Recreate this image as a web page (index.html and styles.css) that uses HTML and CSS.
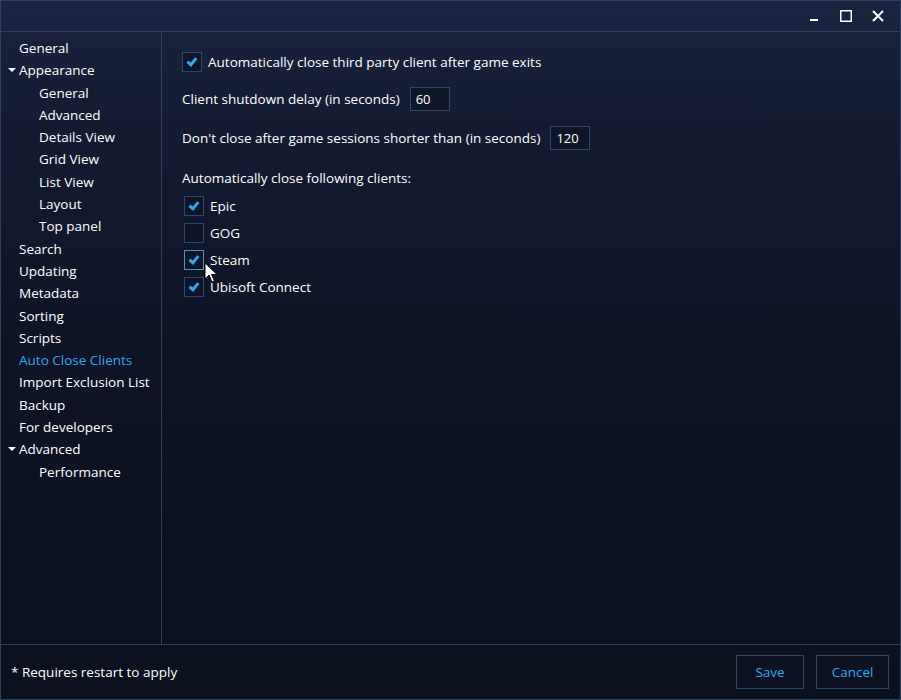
FILE: index.html
```html
<!DOCTYPE html>
<html>
<head>
<meta charset="utf-8">
<link rel="stylesheet" href="styles.css">
</head>
<body>
<div class="window">
  <div class="titlebar">
    <div class="tb-btn"><svg width="10" height="10" viewBox="0 0 10 10"><rect x="1" y="8" width="8" height="2" fill="#fff"/></svg></div>
    <div class="tb-btn"><svg width="12" height="12" viewBox="0 0 12 12"><rect x="0.75" y="0.75" width="10.5" height="10.5" fill="none" stroke="#fff" stroke-width="1.5"/></svg></div>
    <div class="tb-btn"><svg width="12" height="12" viewBox="0 0 12 12"><path d="M1 1L11 11M11 1L1 11" stroke="#fff" stroke-width="2"/></svg></div>
  </div>
  <div class="main">
    <nav class="sidebar">
      <div class="item">General</div>
      <div class="item parent"><span class="arrow"></span>Appearance</div>
      <div class="item sub">General</div>
      <div class="item sub">Advanced</div>
      <div class="item sub">Details View</div>
      <div class="item sub">Grid View</div>
      <div class="item sub">List View</div>
      <div class="item sub">Layout</div>
      <div class="item sub">Top panel</div>
      <div class="item">Search</div>
      <div class="item">Updating</div>
      <div class="item">Metadata</div>
      <div class="item">Sorting</div>
      <div class="item">Scripts</div>
      <div class="item active">Auto Close Clients</div>
      <div class="item">Import Exclusion List</div>
      <div class="item">Backup</div>
      <div class="item">For developers</div>
      <div class="item parent"><span class="arrow"></span>Advanced</div>
      <div class="item sub">Performance</div>
    </nav>
    <section class="content">
      <label class="check-row first"><span class="box checked"></span>Automatically close third party client after game exits</label>
      <div class="field-row"><span>Client shutdown delay (in seconds)</span><span class="input">60</span></div>
      <div class="field-row"><span>Don't close after game sessions shorter than (in seconds)</span><span class="input">120</span></div>
      <div class="section-label">Automatically close following clients:</div>
      <div class="clients">
        <label class="check-row"><span class="box checked"></span>Epic</label>
        <label class="check-row"><span class="box"></span>GOG</label>
        <label class="check-row"><span class="box checked hover"></span>Steam<svg class="cursor" width="14" height="22" viewBox="0 0 14 22"><path d="M1 1L1 17L5 13L8 20L10.5 19L7.5 12.5L13 12.5Z" fill="#fff" stroke="#000" stroke-width="1"/></svg></label>
        <label class="check-row"><span class="box checked"></span>Ubisoft Connect</label>
      </div>
    </section>
  </div>
  <div class="footer">
    <span class="note">* Requires restart to apply</span>
    <div class="buttons">
      <button class="btn save">Save</button>
      <button class="btn cancel">Cancel</button>
    </div>
  </div>
</div>
</body>
</html>
```
FILE: styles.css
```css
html, body {
  margin: 0;
  padding: 0;
  background: #0c1120;
}
body {
  font-family: "Open Sans", "Noto Sans", sans-serif;
  font-size: 13.5px;
  font-weight: 500;
  color: #ffffff;
}
.window {
  width: 901px;
  height: 700px;
  box-sizing: border-box;
  border: 1px solid #2a4260;
  display: flex;
  flex-direction: column;
  background: linear-gradient(to bottom, #1a2340 0px, #141b33 120px, #0e1325 360px, #0c1120 700px);
}
.titlebar {
  height: 30px;
  border-bottom: 1px solid #2a4260;
  display: flex;
  justify-content: flex-end;
  align-items: center;
  padding-right: 6px;
}
.tb-btn {
  width: 32px;
  height: 30px;
  display: flex;
  align-items: center;
  justify-content: center;
}
.main {
  flex: 1;
  display: flex;
  min-height: 0;
  border-bottom: 1px solid #2a4260;
}
.sidebar {
  width: 160px;
  border-right: 1px solid #2a4260;
  padding-top: 5px;
}
.item {
  height: 22.3px;
  line-height: 22.3px;
  padding-left: 18px;
  white-space: nowrap;
  position: relative;
}
.item.sub {
  padding-left: 38px;
}
.item.active {
  color: #2ea8f0;
}
.arrow {
  position: absolute;
  left: 7px;
  top: 9px;
  width: 0;
  height: 0;
  border-left: 4px solid transparent;
  border-right: 4px solid transparent;
  border-top: 4px solid #fff;
}
.content {
  flex: 1;
  padding: 20px 0 0 20px;
}
.check-row {
  display: flex;
  align-items: center;
  height: 20px;
  position: relative;
}
.check-row.first {
  margin-bottom: 15px;
}
.box {
  width: 18px;
  height: 18px;
  border: 1px solid #2b4a68;
  background: #0f1528;
  margin-right: 6px;
  flex: none;
  position: relative;
}
.box.hover {
  border-color: #4f8fc4;
}
.box.checked::after {
  content: "";
  position: absolute;
  left: 6px;
  top: 3px;
  width: 3px;
  height: 7px;
  border-right: 3px solid #2ea8f0;
  border-bottom: 3px solid #2ea8f0;
  transform: rotate(40deg);
}
.field-row {
  display: flex;
  align-items: center;
  height: 24px;
  margin-bottom: 15px;
}
.input {
  margin-left: 10px;
  width: 38px;
  height: 22px;
  border: 1px solid #2b4a68;
  background: #101629;
  line-height: 22px;
  box-sizing: content-box;
  text-indent: 5px;
  font-size: 13px;
}
.section-label {
  padding-top: 3px;
  line-height: 20px;
}
.clients {
  padding-left: 2px;
  margin-top: 8px;
  display: flex;
  flex-direction: column;
  gap: 7px;
}
.cursor {
  position: absolute;
  left: 20px;
  top: 12px;
}
.footer {
  height: 54px;
  display: flex;
  align-items: center;
  justify-content: space-between;
  padding: 0 11px 0 10px;
}
.buttons {
  display: flex;
  gap: 12px;
}
.btn {
  height: 34px;
  border: 1px solid #2b4a68;
  background: #0d1222;
  color: #2ea8f0;
  font-family: inherit;
  font-size: 13.5px;
  font-weight: 500;
}
.btn.save { width: 68px; }
.btn.cancel { width: 73px; }
```
